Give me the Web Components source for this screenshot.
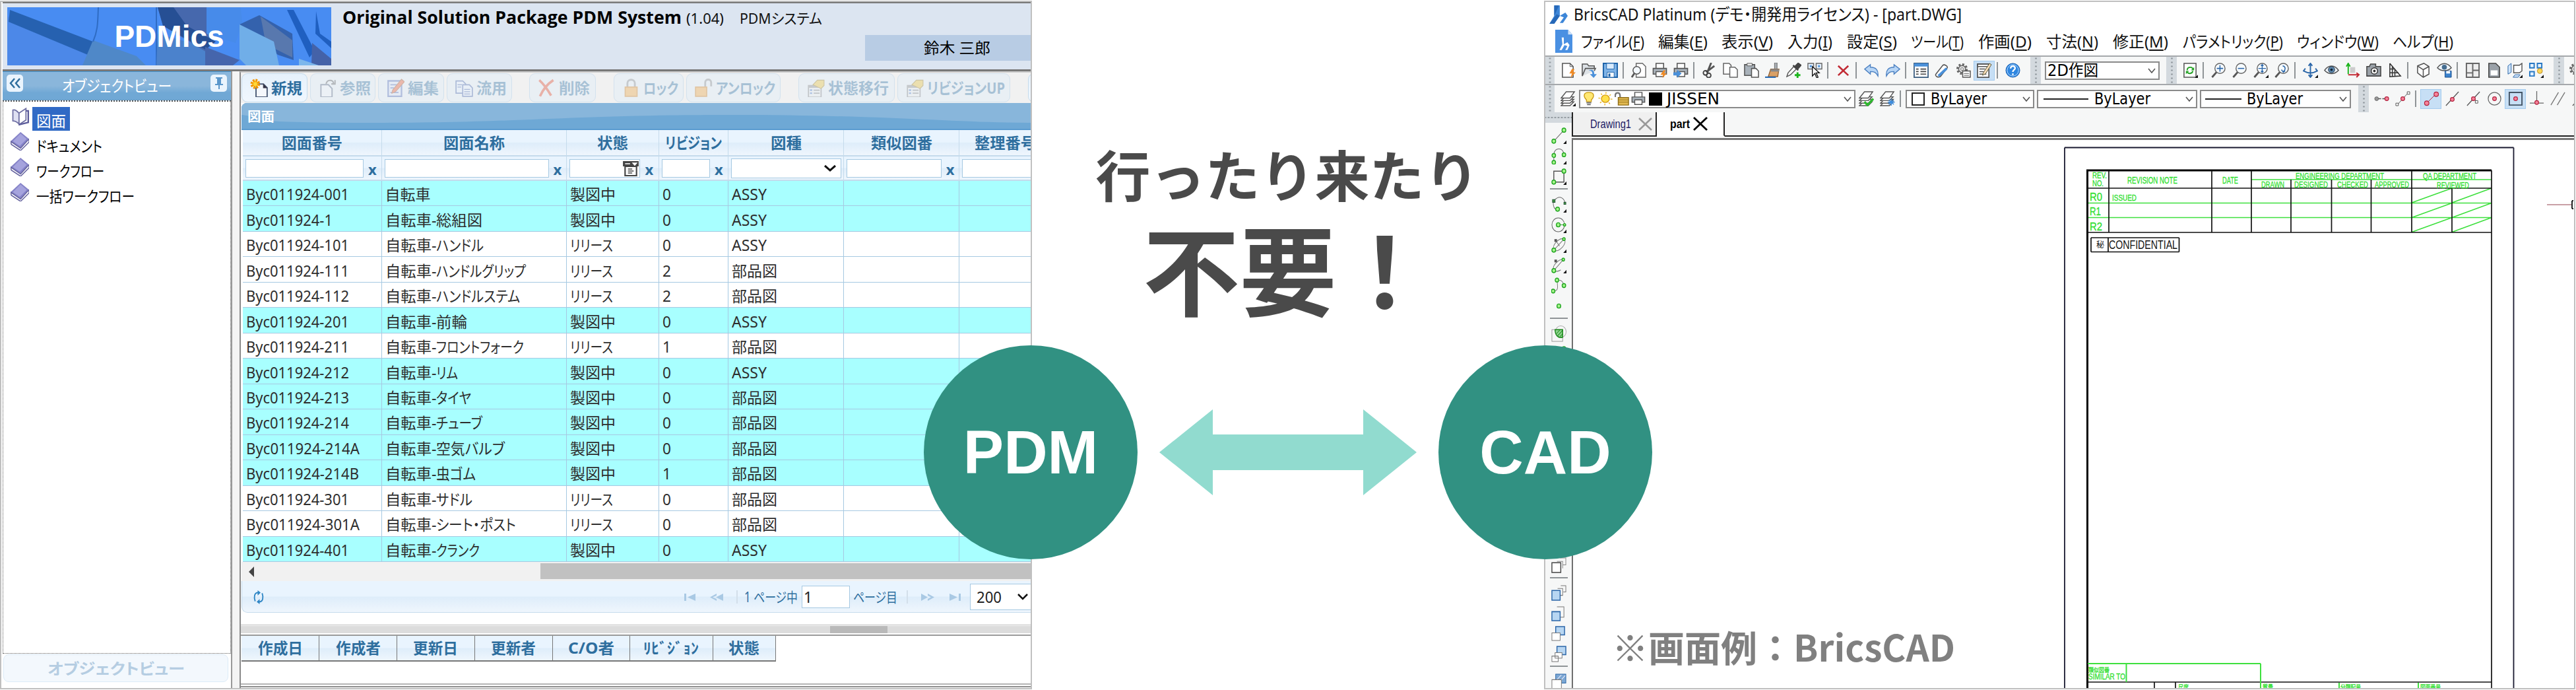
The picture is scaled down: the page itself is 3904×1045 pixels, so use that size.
<!DOCTYPE html>
<html lang="ja">
<head>
<meta charset="utf-8">
<title>PDMics / CAD</title>
<style>
    body{
        margin: 0;
        width: 3904px;
        height: 1045px;
        overflow: hidden;
        background-color: rgb(255, 255, 255);
        font-family: "Noto Sans", "Noto Sans CJK JP", sans-serif;
        line-height: 1;
    }
</style>
</head>
<body>
<link-banner></link-banner>
<script>

// every element clones its own template into an open shadow root
class BaseElement extends HTMLElement {
    constructor(){
        super();
        this.attachShadow({mode:'open'});
        const template = document.createElement('template');
        template.innerHTML = this.render();
        this.shadowRoot.appendChild(template.content.cloneNode(true));
    }
    render(){
        return '<slot></slot>';
    }
}

// one line of text squeezed or stretched to the width in its "w" attribute
class FitText extends BaseElement {
    render(){
        return `
        <style>
            :host{ display: inline-block; white-space: nowrap; text-align: left; font-feature-settings: "palt"; flex: none; }
            span{ display: inline-block; transform-origin: 0 50%; }
        </style>
        <span><slot></slot></span>`;
    }
    connectedCallback(){
        const span = this.shadowRoot.querySelector('span');
        const w = parseFloat(this.getAttribute('w'));
        const real = span.getBoundingClientRect().width;
        if(real > 0){
            span.style.transform = 'scaleX('+(w / real)+')';
        }
        this.style.width = w+'px';
    }
}
const fit = (w, text) => `<fit-text w="${w}">${text}</fit-text>`;

/* ---------- icons ---------- */
const G = 'fill="#a6f58c" stroke="#1fa51f" stroke-width="1.4"';
const R = 'fill="#f5849b" stroke="#b3203c" stroke-width="1.2"';
const corner = '<path d="M24 19v5h-5z" fill="#111"/>';
const printer = '<path d="M6 9V1h12v8" fill="#fff" stroke="#555" stroke-width="1.600"/><path d="M1.500 9h21v9h-21z" fill="#a9b2ba" stroke="#555" stroke-width="1.600"/><path d="M6 14h12v8H6z" fill="#fff" stroke="#555" stroke-width="1.500"/>';
const layers = '<g fill="#fff" stroke="#555" stroke-width="1.500"><path d="M1 23 7 17h14l-6 6z"/><path d="M1 19 7 13h14l-6 6z"/><path d="M1 15 7 9h14l-6 6z"/><path d="M1 11 9 1h13l-7 10z"/></g>';
const lens = '<path d="m8.500 15-7 8" stroke="#555" stroke-width="3"/><circle cx="14" cy="9" r="8" fill="#f6fbff" stroke="#666" stroke-width="1.500"/>';
const gear = '<circle cx="10" cy="10" r="7" fill="none" stroke="#666" stroke-width="4" stroke-dasharray="3 2.500"/><circle cx="10" cy="10" r="5.500" fill="#ddd" stroke="#666" stroke-width="1.500"/><circle cx="10" cy="10" r="2" fill="#fff" stroke="#666"/>';
const prop = '<path d="M2 9h17v15H2z" fill="#eee" stroke="#777" stroke-width="1.500"/><path d="M2 9h17v3H2z" fill="#888"/><path d="M4 15h3M4 19h3" stroke="#4472c4" stroke-width="2"/><path d="M9 15h8M9 19h8" stroke="#777" stroke-width="1.500"/><path d="m8 8 6-6h9v7l-4 4z" fill="#f1c232" stroke="#9c7a12"/>';

const icons = {
    // pdm toolbar
    newDoc: '<path d="M8 7h10l5 5v12H8z" fill="#f4f7fc" stroke="#4c5b77" stroke-width="1.700"/><path d="M18 7v5h5" fill="#334" stroke="#334"/><circle cx="7" cy="7" r="4.500" fill="#ffd83a" stroke="#f29400" stroke-width="4" stroke-dasharray="2.200 1.300"/>',
    openDoc: '<path d="M3 8h10l5 5v11H3z" fill="#f4f7fc" stroke="#4c5b77" stroke-width="1.700"/><path d="M10 7c1-6 9-6 10-1M22 2v5h-5" fill="none" stroke="#555" stroke-width="1.800"/>',
    editDoc: '<path d="M2 3h18v20H2z" fill="#dfe6f8" stroke="#4b66b5" stroke-width="2"/><path d="M5 8h9M5 12h5M5 18h11" stroke="#4b66b5" stroke-width="1.500"/><path d="M8 15 20 1l4 3-12 13-5 2z" fill="#f0532a" stroke="#a34415"/>',
    copyDoc: '<g fill="#e7efff" stroke="#3c5ba5" stroke-width="1.500"><path d="M1 3h9l4 4v12H1z"/><path d="M10 8h9l4 4v11H10z"/></g><path d="M12 14h8M12 17h8M12 20h8M3 8h6M3 11h5" stroke="#3c5ba5"/>',
    del: '<path d="M2 2c6 5 11 12 16 20M21 2C13 7 7 14 3 23" fill="none" stroke="#e8401c" stroke-width="3.200"/>',
    lock: '<path d="M7 12V6c0-6 10-6 10 0v6" fill="none" stroke="#888" stroke-width="2.500"/><path d="M4 11h16v12H4z" fill="#f8a73a" stroke="#d17a12" stroke-width="1.500"/>',
    unlock: '<path d="M14 12V5c0-5 8-5 8 0v5" fill="none" stroke="#888" stroke-width="2.500"/><path d="M1 11h15v12H1z" fill="#f8a73a" stroke="#d17a12" stroke-width="1.500"/>',
    prop: prop,
    bookOpen: '<path d="M3 4c3-1 5 1 8 4v14c-3-3-5-4-8-4z" fill="#dfe0f2" stroke="#6e6ea2" stroke-width="1.500"/><path d="M11 8 20 2v15l-9 6z" fill="#fff" stroke="#6e6ea2" stroke-width="1.500"/><path d="M20 5h3v15l-12 3" fill="none" stroke="#5c5c9b" stroke-width="2"/>',
    book: '<path d="M0 12 13 0l11 9-11 12z" fill="#8583c8"/><path d="M3 12 13 2l8 7-9 9z" fill="#a5a3dd"/><path d="m0 12 1 4 12 8 11-11V9L13 21z" fill="#fff" stroke="#66649f" stroke-width="1.300"/>',
    refresh: '<path d="M11 4C3 4 2 12 5 19M13 20c8 0 9-8 6-15" fill="none" stroke="#2f86c5" stroke-width="2.500"/><path d="M10 0v9l6-5zM14 15v9l-6-4z" fill="#2f86c5"/>',
    filter: '<path d="M1 1h22v8H1z" fill="#444"/><path d="M4 5h7M15 4h5l-2.500 3z" stroke="#fff" stroke-width="1.500" fill="#fff"/><path d="M4 9h16v14H4z" fill="#fff" stroke="#444" stroke-width="2"/><path d="M8 13h6M8 16h8M8 19h6" stroke="#444" stroke-width="1.500"/>',
    // cad toolbar
    logo: '<path d="M7 1h7v13l7-4 3 4-6 9h-4l5-7-5-2-7 10H1l6-10z" fill="#3d86d8"/><path d="M7 1h6L7 14zM1 24l9-12 4 2-7 10z" fill="#2668b8"/>',
    doclogo: '<path d="M0 0h18l6 5v19H0z" fill="#4a90e2"/><path d="M18 0v5h6z" fill="#cfe2f8"/><path d="M9 8h3v7l5-2 3 3-3 5h-3l3-4-4-1-4 5H6l4-6z" fill="#fff"/>',
    cnew: '<path d="M3 1h12l5 5v17H3z" fill="#fff" stroke="#555" stroke-width="1.600"/><path d="M15 1v5h5" fill="none" stroke="#555"/><path d="m18 10-4 7h4l-2 7 8-9h-4l2-5z" fill="#f08a24"/>',
    copen: '<path d="M1 21V2h8l2 3h9v4M1 21 6 9h16l-2 4" fill="#dde2e6" stroke="#555" stroke-width="1.600"/><path d="M11 12c5 0 6 3 6 6h-4l6 6 5-6h-4c0-6-3-8-9-6z" fill="#4a90d9"/>',
    csave: '<path d="M1 1h22v22H1z" fill="#7fb3e6" stroke="#1d62a8" stroke-width="2"/><path d="M6 1h12v9H6z" fill="#d9ebfd" stroke="#1d62a8"/><path d="M7 15h11v8H7z" fill="#fff" stroke="#1d62a8"/><path d="M9 17h3v5H9z" fill="#1d62a8"/>',
    preview: '<path d="M8 1h10l5 5v17H8z" fill="#fff" stroke="#666" stroke-width="1.500"/><circle cx="9" cy="12" r="6" fill="#f4f9ff" stroke="#555" stroke-width="1.600"/><path d="m5 17-4 6" stroke="#555" stroke-width="3"/>',
    print: printer + '<path d="m18 12-5 7h4l-1 5 7-7h-4l2-5z" fill="#f08a24"/>',
    publish: printer + '<path d="M0 15h6v-4l7 6-7 7v-4H0z" fill="#4a90d9"/>',
    cut: '<path d="M15 0 9 15M20 5 7 15" stroke="#555" stroke-width="3"/><circle cx="6" cy="16" r="3.500" fill="none" stroke="#444" stroke-width="2"/><circle cx="11" cy="20" r="3.500" fill="none" stroke="#444" stroke-width="2"/>',
    copy: '<g fill="#fff" stroke="#666" stroke-width="1.600"><path d="M1 1h9l3 3v14H1z"/><path d="M11 7h8l4 4v12H11z"/></g>',
    paste: '<path d="M1 3h16v17H1z" fill="#a9b2ba" stroke="#555" stroke-width="1.600"/><path d="M5 1h8v4H5z" fill="#eee" stroke="#555"/><path d="M12 9h7l4 4v10H12z" fill="#fff" stroke="#555" stroke-width="1.600"/>',
    brush: '<path d="M15 0h4v10h-4z" fill="#aab0b6" stroke="#666"/><path d="M9 10h13l-2 12H5z" fill="#d9a066" stroke="#8d5a2b" stroke-width="1.300"/><path d="M9 10h13v4H9z" fill="#888"/><path d="M0 23h17" stroke="#2b6cb3" stroke-width="2.500"/>',
    pick: '<path d="M1 22 3 16 12 6l4 4-9 9z" fill="#fff" stroke="#555" stroke-width="1.500"/><path d="m11 4 8 8M14 6l5-5 4 3-5 6z" stroke="#444" fill="#444" stroke-width="2.500"/><path d="M18 15v9M13.500 19.500h9" stroke="#1db51d" stroke-width="3"/>',
    select: '<g fill="#e8f2fc" stroke="#666" stroke-width="1.500"><path d="M1 1h9v9H1z"/><path d="M14 1h9v9h-9z"/></g><path d="M4 4h3v3H4zM17 4h3v3h-3z" fill="#4a90d9"/><path d="M8 6v15l4-4 3 7 2-1-3-7h5z" fill="#fff" stroke="#111" stroke-width="1.400"/>',
    cross: '<path d="m4 5 16 15M20 5 4 20" stroke="#c22b35" stroke-width="2.700"/>',
    undo: '<path d="M1 10 10 3v4c9 0 13 5 12 14-3-6-6-7-12-7v4z" fill="#b7d5f5" stroke="#4a7fc0" stroke-width="1.400"/>',
    redo: '<path d="m23 10-9-7v4C5 7 1 12 2 21c3-6 6-7 12-7v4z" fill="#b7d5f5" stroke="#4a7fc0" stroke-width="1.400"/>',
    propPanel: '<path d="M1 1h22v22H1z" fill="#fff" stroke="#36597d" stroke-width="1.800"/><path d="M1 1h22v5H1z" fill="#4a90d9"/><path d="M4 10h4M4 14h4M4 18h4M11 10h9M11 14h9M11 18h9" stroke="#444" stroke-width="1.800"/>',
    eraser: '<path d="M2 18 13 4c2-2 8 1 7 4L9 22c-4 2-9-1-7-4z" fill="#fff" stroke="#555" stroke-width="1.600"/><path d="M6 21 19 9" stroke="#4a90d9" stroke-width="4"/>',
    gear: gear + '<path d="M11 13h12v10H11z" fill="#fff" stroke="#555" stroke-width="1.500"/><path d="M13 17h8M13 20h8" stroke="#555"/>',
    note: '<path d="M1 2h18v21H1z" fill="#fff" stroke="#555" stroke-width="1.800"/><path d="M1 2h18v4H1zM4 10h9M4 14h7M4 18h11" stroke="#555" stroke-width="1.500"/><path d="M10 16 20 1l3 2-9 14-5 3z" fill="#f7dcb8" stroke="#553"/>',
    help: '<circle cx="12" cy="12" r="11" fill="#2e86e0" stroke="#1b5fae"/><circle cx="12" cy="12" r="9" fill="none" stroke="#bcdcff" stroke-width="1"/><path d="M8.500 9c0-5 7.500-4.500 7 0-.3 2.500-3.500 2.500-3.500 5.500M12 17v2.500" fill="none" stroke="#fff" stroke-width="2.400"/>',
    regen: '<path d="M2 1h19v22H2z" fill="#fff" stroke="#555" stroke-width="1.600"/><path d="M7 12c0-6 8-6 9-2M16 13c-1 5-8 5-9 1" fill="none" stroke="#28a428" stroke-width="2"/><path d="M18 7v5h-5zM5 18v-5h5z" fill="#28a428"/>' + corner,
    zoomIn: lens + '<path d="M14 4v10M9 9h10" stroke="#2b66a8" stroke-width="1.600"/>',
    zoomOut: lens + '<path d="M9 9h10" stroke="#2b66a8" stroke-width="1.600"/>',
    zoomAll: lens + '<path d="M14 3v12M8 9h12M12 5l2-2 2 2M12 13l2 2 2-2" stroke="#2b66a8" stroke-width="1.500" fill="none"/>' + corner,
    zoomPrev: lens + '<path d="M14 14c4-3 4-8-1-9M11 11l3 4 3-2" stroke="#2b66a8" stroke-width="1.500" fill="none"/>',
    pan: '<path d="M12 2v20M2 13c5 4 15 4 20 0M9 5l3-4 3 4M9 19l3 4 3-4M4 9l-3 4 5 2M20 9l3 4-5 2" fill="none" stroke="#2b66a8" stroke-width="2"/>' + corner,
    eye: '<path d="M1 12c6-9 16-9 22 0-6 7-16 7-22 0z" fill="#eef4fa" stroke="#555" stroke-width="1.500"/><circle cx="12" cy="11" r="5" fill="#5c87ad" stroke="#234"/><circle cx="12" cy="11" r="2" fill="#123"/>',
    ucs: '<path d="M8 7h8v9H8z" fill="#ccc"/><path d="M5 18V3M2 6l3-5 3 5" fill="none" stroke="#1db51d" stroke-width="2"/><path d="M5 19h16M18 16l4 3-4 4" fill="none" stroke="#c22b35" stroke-width="2"/>',
    camera: '<path d="M1 6h4l2-4h8v4h8v15H1z" fill="#9aa1a8" stroke="#444" stroke-width="1.600"/><circle cx="13" cy="13" r="5" fill="#fff" stroke="#333" stroke-width="1.500"/><circle cx="13" cy="13" r="2" fill="#333"/>',
    ramp: '<path d="M4 1v21l17-1L4 1M4 16h14M8 5v17M12 10v11M4 10h7" fill="none" stroke="#333" stroke-width="1.600"/>',
    cube: '<path d="M3 5 13 1l8 5v12l-9 5-9-7zM3 5l9 6 9-5M12 11v12" fill="#fff" stroke="#555" stroke-width="1.600"/>',
    eyeSave: '<path d="M1 8c6-9 16-9 22 0-6 6-16 6-22 0z" fill="#eef4fa" stroke="#555" stroke-width="1.500"/><circle cx="12" cy="7" r="4" fill="#456d90"/><path d="M13 13h10v10H13z" fill="#3b82cc" stroke="#1d4f8b"/><path d="M15 13h6v4h-6z" fill="#fff"/>',
    grid: '<path d="M2 1h20v22H2zM12 1v22M12 12h10M2 16h10" fill="#eee" stroke="#666" stroke-width="2"/>',
    sheet: '<path d="M4 1h11l6 6v16H4z" fill="#9aa1a8" stroke="#444" stroke-width="1.600"/><path d="M7 12h11v8H7z" fill="#fff"/>',
    views: '<path d="M1 5l5-4v14l-5 3z" fill="#cfe4fa" stroke="#2b66a8"/><path d="M10 4h9l4-3v12l-4 3h-9z" fill="#fff" stroke="#555" stroke-width="1.500"/><path d="M9 23l3-4h8l-3 4z" fill="#cfe4fa" stroke="#2b66a8"/>' + corner,
    blocks: '<g fill="#e5f2ff" stroke="#2778c4" stroke-width="2"><path d="M2 1h7v7H2zM14 1h7v7h-7zM2 14h7v7H2z"/></g><circle cx="18" cy="13" r="4" fill="#ffd65a" stroke="#b38a1c"/>' + corner,
    layer: layers + corner,
    layerOk: layers + '<path d="m9 17 5 5 9-10" fill="none" stroke="#2fb92f" stroke-width="3.500"/>',
    layerStar: layers + '<path d="M18 12v11M12.500 17.500h11M14 14l8 7M22 14l-8 7" stroke="#3c8de0" stroke-width="1.500"/>',
    bulb: '<path d="M12 1c10 0 9 8 4 13v3H8v-3C3 9 2 1 12 1z" fill="#ffe873" stroke="#c99a13" stroke-width="1.500"/><path d="M8 19h8M9 22h6" stroke="#666" stroke-width="2"/>',
    sun: '<circle cx="12" cy="12" r="10" fill="none" stroke="#e8b419" stroke-width="3" stroke-dasharray="1.500 6.350"/><circle cx="12" cy="12" r="6.500" fill="#ffe14d" stroke="#d89c10" stroke-width="1.500"/>',
    padlock: '<path d="M9 10V7c0-7-8-7-8 0v2" fill="none" stroke="#777" stroke-width="2.500"/><path d="M6 10h17v13H6z" fill="#e2ba52" stroke="#8e6d18" stroke-width="1.500"/><path d="M6 14h17M6 18h17" stroke="#8e6d18"/>',
    printer: printer,
    // draw strip
    line: `<path d="M5 19 19 5" stroke="#666"/><circle cx="4" cy="20" r="3" ${G}/><circle cx="20" cy="4" r="3" ${G}/>` + corner,
    pline: `<path d="M4 20V9C6-1 18-1 20 9" fill="none" stroke="#666"/><circle cx="4" cy="21" r="2.800" ${G}/><circle cx="4" cy="11" r="2.800" ${G}/><circle cx="20" cy="10" r="2.800" ${G}/>` + corner,
    rect: `<path d="M4 4h16v16H4z" fill="none" stroke="#555" stroke-width="1.500"/><circle cx="4" cy="20" r="3" ${G}/><circle cx="20" cy="4" r="3" ${G}/>` + corner,
    arc: `<path d="M5 6c9-9 16-2 17 5M3 9c0 6 2 10 6 11" fill="none" stroke="#666"/><path d="M2 5h4v4H2zM20 9h3v3h-3z" fill="#494" stroke="#253"/><circle cx="10" cy="19" r="3" ${G}/>` + corner,
    circle: `<circle cx="11" cy="12" r="10" fill="none" stroke="#666"/><path d="M11 12h10" stroke="#494"/><circle cx="11" cy="12" r="3" ${G}/><circle cx="21" cy="12" r="1.800" ${G}/>` + corner,
    ellipse: `<path d="M4 20C0 14 12 1 20 4c7 5-8 21-16 16zM4 20 20 4M7 6l6 8" fill="none" stroke="#777"/><path d="M5 4h4v4H5z" fill="#555"/><circle cx="4" cy="20" r="3" ${G}/><circle cx="20" cy="4" r="2" ${G}/>` + corner,
    earc: `<path d="M4 20C0 13 12 3 19 4M4 20c3 2 8 1 11-1M4 20 19 4" fill="none" stroke="#777"/><path d="M5 4h4v4H5z" fill="#555"/><circle cx="4" cy="20" r="3" ${G}/><circle cx="19" cy="4" r="2" ${G}/>` + corner,
    spline: `<path d="M4 20c12 0 1-17 8-16 5 0 7 3 8 8" fill="none" stroke="#777"/><circle cx="3" cy="20" r="2.800" ${G}/><circle cx="9" cy="4" r="2.800" ${G}/><circle cx="20" cy="12" r="2.800" ${G}/>`,
    point: `<circle cx="12" cy="12" r="3" ${G}/>`,
    hatch: '<path d="M1 6h17v17H1z" fill="none" stroke="#999"/><circle cx="15" cy="9" r="8.500" fill="none" stroke="#aaa"/><path d="M6 6h12v11c-7 2-12-3-12-11z" fill="#8ed48e" stroke="#1c8a1c" stroke-width="1.500"/><path d="m8 12 6-6M10 15l8-8M14 16l4-4" stroke="#1c8a1c"/>',
    front0: '<path d="M14 1h9v10h-5M9 6h9v10" fill="none" stroke="#888"/><path d="M1 8h14v14H1z" fill="#fff" stroke="#444" stroke-width="1.500"/>',
    front: '<path d="M15 1h8v9h-4M10 5h8v10h-4" fill="none" stroke="#777"/><path d="M1 8h13v14H1z" fill="#b7d6f2" stroke="#2b66a8" stroke-width="1.500"/>',
    above: '<path d="M9 2h11v15h-6" fill="none" stroke="#777"/><path d="M1 9h13v13H1z" fill="#b7d6f2" stroke="#2b66a8" stroke-width="1.500"/>',
    under: '<path d="M7 2h14v12H7z" fill="#b7d6f2" stroke="#2b66a8" stroke-width="1.500"/><path d="M1 11h13v11H1z" fill="#fff" stroke="#777"/>',
    back: '<path d="M9 1h14v12H9z" fill="#b7d6f2" stroke="#2b66a8" stroke-width="1.500"/><path d="M6 10h11v8H6zM1 15h10v8H1z" fill="#fff" stroke="#777"/>',
    hback: '<path d="M7 1h16v13H7z" fill="#7ba7d3" stroke="#2b66a8"/><path d="m8 10 8-8M12 13 22 3" stroke="#eef"/><path d="M1 9h15v14H1z" fill="#fff" stroke="#777"/>',
    // snap strip
    trackPt: `<path d="M4 12h7M13 12h6" stroke="#555" stroke-width="1.500"/><circle cx="4" cy="12" r="3" fill="#999" stroke="#666"/><circle cx="20" cy="12" r="3" ${R}/>`,
    from: `<path d="M3 22 21 2" stroke="#555"/><path d="M1 19h4v4H1zM19 1h4v4h-4z" fill="#fff" stroke="#555"/><circle cx="12" cy="12" r="3" ${R}/>`,
    endpt: `<path d="M5 19 19 5" stroke="#b3203c"/><circle cx="5" cy="19" r="3.500" ${R}/><circle cx="20" cy="5" r="3.500" ${R}/>`,
    midpt: `<path d="M2 23 22 1" stroke="#555" stroke-width="1.300"/><circle cx="12" cy="13" r="3" ${R}/>`,
    nearpt: `<path d="M2 23 22 1M12 12l6 5" stroke="#555" stroke-width="1.300"/><circle cx="12" cy="12" r="3" ${R}/><path d="M15 15h4v4h-4z" fill="#fff" stroke="#555"/>`,
    centpt: `<circle cx="12" cy="12" r="10" fill="none" stroke="#666" stroke-width="1.300"/><circle cx="12" cy="12" r="3" ${R}/>`,
    geopt: `<path d="M2 2h20v20H2z" fill="none" stroke="#456" stroke-width="2"/><circle cx="12" cy="12" r="3" ${R}/>`,
    perp: `<path d="M12 0v18M1 19h22" stroke="#666" stroke-width="1.300"/><circle cx="12" cy="18" r="3" ${R}/>`,
    para: '<path d="M1 22 13 2M11 22 23 2" stroke="#777" stroke-width="1.400"/>'
};

class UiIcon extends BaseElement {
    render(){
        return `
        <style>
            :host{ display: block; width: 24px; height: 24px; flex: none; }
            svg{ display: block; width: 100%; height: 100%; fill: none; }
        </style>
        <svg viewBox="0 0 24 24" preserveAspectRatio="none"></svg>`;
    }
    connectedCallback(){
        this.shadowRoot.querySelector('svg').innerHTML = icons[this.getAttribute('name')] || '';
    }
}

/* ---------- PDM side ---------- */
class PdmHeader extends BaseElement {
    render(){
        return `
        <style>
            :host{
                display: flex;
                box-sizing: border-box;
                height: 105px;
                padding: 6px 0 0 7px;
                background-color: rgb(220, 229, 241);
                border-top: 2px solid rgb(120, 120, 120);
                border-bottom: 3px solid rgb(120, 120, 120);
            }
            .banner{ display: grid; width: 491px; height: 88px; }
            .banner > *{ grid-area: 1 / 1; }
            .banner span{
                place-self: center;
                font: bold 46px/46px "Liberation Sans", sans-serif;
                color: rgb(255, 255, 255);
            }
            .info{ flex: 1; display: flex; flex-direction: column; padding-left: 17px; }
            .title{ display: flex; align-items: baseline; height: 42px; font-size: 22px; color: #111; }
            b{ font-size: 26px; line-height: 30px; font-family: "Open Sans", sans-serif; color: #000; }
            .user{
                align-self: flex-end;
                display: flex;
                align-items: center;
                width: 162px;
                height: 39px;
                padding-left: 89px;
                background-color: rgb(184, 204, 228);
                font-size: 23px;
            }
        </style>
        <div class="banner">
            <svg width="491" height="88" viewBox="0 0 491 88">
                <rect width="491" height="88" fill="#488cf2"/>
                <path d="M0 14 130 66 118 88H0z" fill="#4c88e8"/>
                <path d="m4 4 126 48-8 20L2 22z" fill="#2661b0"/>
                <path d="m130 50 66 24 14 14H114z" fill="#4f88c8"/>
                <path d="M138 0c-1 20 0 34-8 52M226 0v88" stroke="#2f6cc4" stroke-width="2" fill="none"/>
                <path d="M228 40 300 60v28h-74z" fill="#4b82cc"/>
                <path d="M228 0h74l14 34-14 34-66-40z" fill="#4668ad"/>
                <path d="m228 0 24 0 20 28 44 24-16 12-64-36z" fill="#264f94"/>
                <path d="M300 60 352 80l-10 8h-42z" fill="#4565ac"/>
                <path d="m302 0 52 0 2 24-10 30-44-14z" fill="#478bea"/>
                <path d="m352 26 30-14 50 28 2 40-24-8z" fill="#3462ad"/>
                <path d="m384 14 48 36v26l-40-20z" fill="#5878ae"/>
                <path d="m352 26 52 26 8 36h-50l-10-10z" fill="#70aee8"/>
                <path d="m424 4 10 0 32 62-8 10zM468 6l6 34 17 12v10l-24-22z" fill="#1f5fc0"/>
                <path d="m462 54 29 24v10h-30z" fill="#4462a8"/>
                <path d="m442 78 30 10h-30z" fill="#7db7ec"/>
            </svg>
            <span>PDMics</span>
        </div>
        <div class="info">
            <div class="title"><b>${fit(514, 'Original Solution Package PDM System')}</b><i style="width:7px"></i>${fit(57, '(1.04)')}<i style="width:24px"></i>${fit(125, 'PDMシステム')}</div>
            <div class="user">${fit(101, '鈴木 三郎')}</div>
        </div>`;
    }
}

class ObjectView extends BaseElement {
    render(){
        const item = (icon, w, text, on) => `<div class="item"><ui-icon name="${icon}"></ui-icon><span class="${on ? 'on' : ''}">${fit(w, text)}</span></div>`;
        return `
        <style>
            :host{
                display: flex;
                flex-direction: column;
                box-sizing: border-box;
                width: 348px;
                border-right: 2px solid #999;
                background: #fff;
            }
            header{
                display: flex;
                align-items: center;
                justify-content: space-between;
                height: 42px;
                padding: 0 6px;
                border-top: 1px solid #4297d7;
                border-bottom: 1px solid #6a9cc4;
                background: linear-gradient(#8ab6db 50%, #70a8d5 75%);
                color: #fff;
                font-size: 24px;
            }
            .box{
                display: grid;
                place-items: center;
                width: 25px;
                height: 26px;
                margin-bottom: 8px;
                border-radius: 5px;
                background: #eaf4fd;
            }
            .tree{
                flex: 1;
                padding: 8px 0 0 11px;
                border: 1px dotted #555;
                border-width: 2px 1px 1px 1px;
            }
            .item{ display: flex; height: 38.300px; font-size: 23px; }
            .item ui-icon{ width: 28px; height: 28px; }
            .item span{ display: flex; align-items: center; box-sizing: border-box; height: 36px; margin-left: 5px; padding: 6px 6px 0; }
            .item .on{ background: #316ac5; color: #fff; }
            footer{
                display: grid;
                place-items: center;
                width: 341px;
                height: 42px;
                margin: 1px 0 9px 1px;
                border: 1px solid #dcebf7;
                box-sizing: border-box;
                border-radius: 8px;
                background: #f3f8fd;
                color: #b5cde2;
                font-size: 23px;
                font-weight: bold;
            }
        </style>
        <header>
            <div class="box"><svg width="18" height="16"><path d="m8 1-6 7 6 7M16 1l-6 7 6 7" fill="none" stroke="#2e6e9e" stroke-width="2.500"/></svg></div>
            ${fit(166, 'オブジェクトビュー')}
            <div class="box"><svg width="14" height="18"><path d="M2 1h10M1 11h12M7 11v7" stroke="#5b97cb" stroke-width="2"/><path d="M4 1h6v10H4z" fill="#5b97cb"/></svg></div>
        </header>
        <div class="tree">
            ${item('bookOpen', 45, '図面', true)}
            ${item('book', 100, 'ドキュメント')}
            ${item('book', 103, 'ワークフロー')}
            ${item('book', 149, '一括ワークフロー')}
        </div>
        <footer>${fit(208, 'オブジェクトビュー')}</footer>`;
    }
}

class PdmToolbar extends BaseElement {
    render(){
        // [icon, button width, text width, label, gap after]
        const buttons = [
            ['newDoc', 100, 47, '新規', 4], ['openDoc', 99, 47, '参照', 4], ['editDoc', 100, 47, '編集', 4], ['copyDoc', 99, 46, '流用', 26],
            ['del', 101, 47, '削除', 27], ['lock', 106, 53, 'ロック', 4], ['unlock', 143, 90, 'アンロック', 27],
            ['prop', 146, 92, '状態移行', 4], ['prop', 171, 118, 'リビジョンUP', 27]
        ];
        return `
        <style>
            :host{ display: flex; height: 46px; padding: 1px 0 0 1px; box-sizing: border-box; background: #f1f1f1; overflow: hidden; }
            div{
                display: flex;
                align-items: center;
                flex: none;
                box-sizing: border-box;
                height: 44px;
                padding-left: 12px;
                border: 1px solid #d3e2ee;
                border-radius: 9px;
                background: #e9eff4;
                color: #2e6e9e;
                font-size: 23px;
                font-weight: bold;
            }
            div > *{ opacity: .35; }
            .on{ background: linear-gradient(#e6f1fb, #f0f7fe); border-color: #c5dbec; }
            .on > *{ opacity: 1; }
            ui-icon{ width: 27px; height: 28px; margin-right: 5px; }
        </style>
        ${buttons.map((b, i) => `<div class="${i ? '' : 'on'}" style="width:${b[1]}px;margin-right:${b[4]}px"><ui-icon name="${b[0]}"></ui-icon>${fit(b[2], b[3])}</div>`).join('')}
        <div class="on" style="width:60px"></div>`;
    }
}

class DrawingGrid extends BaseElement {
    render(){
        // [number, number width, name, name width, released, revision]
        const rows = [
            ['001', 156, '', 0, 0, 0], ['1', 131, '総組図', 70, 0, 0], ['101', 156, 'ハンドル', 72, 1, 0], ['111', 156, 'ハンドルグリップ', 136, 1, 2],
            ['112', 156, 'ハンドルステム', 127, 1, 2], ['201', 156, '前輪', 47, 0, 0], ['211', 156, 'フロントフォーク', 133, 1, 1], ['212', 156, 'リム', 33, 0, 0],
            ['213', 156, 'タイヤ', 53, 0, 0], ['214', 156, 'チューブ', 70, 0, 0], ['214A', 172, '空気バルブ', 104, 0, 0], ['214B', 171, '虫ゴム', 60, 0, 1],
            ['301', 156, 'サドル', 55, 1, 0], ['301A', 172, 'シート・ポスト', 121, 1, 0], ['401', 156, 'クランク', 66, 0, 0]
        ];
        const assy = ['001', '1', '101', '201', '212', '401'];
        const heads = [[92, '図面番号'], [93, '図面名称'], [47, '状態'], [86, 'リビジョン'], [47, '図種'], [93, '類似図番'], [93, '整理番号']];
        const field = w => `<div class="f"><i style="width:${w}px"></i><b>x</b></div>`;
        return `
        <style>
            :host{ display: block; margin-left: 1px; font-size: 23px; color: #2e2e2e; }
            .caption{ display: grid; height: 41px; background: #6ea8d5; border-radius: 8px 0 0 0; overflow: hidden; box-sizing: border-box; border-bottom: 2px solid #5a9bd0; }
            .caption > *{ grid-area: 1 / 1; }
            .caption b{ align-self: center; padding: 0 0 0 9px; color: #fff; font-size: 20px; }
            .row{
                display: grid;
                grid-template-columns: 210.500px 280.500px 139.500px 105.500px 175px 175px 140px;
                width: 1226px;
                overflow: hidden;
                box-sizing: border-box;
                margin-left: 2px;
            }
            .row > div{ display: flex; align-items: center; border-right: 1px solid #a6c9e2; box-sizing: border-box; }
            .head{ height: 40px; background: linear-gradient(#e9f4fe 48%, #deedfa 52%, #eff6fd); color: #2e6e9e; font-weight: bold; border-bottom: 2px solid #c5dbec; }
            .head > div{ justify-content: center; border-color: #c5dbec; }
            .filter{ height: 37px; background: linear-gradient(#e9f4fe 48%, #deedfa 52%, #eff6fd); border-bottom: 2px solid #c5dbec; }
            .filter > div{ border-color: #c5dbec; padding-left: 4px; }
            .filter i{ display: flex; box-sizing: border-box; flex: none; height: 28px; border: 1px solid #a6c9e2; background: #fff; align-items: center; justify-content: flex-end; }
            .filter b{ flex: 1; text-align: center; color: #2e6e9e; font-size: 22px; line-height: 22px; padding-top: 3px; }
            .data{ height: 38.470px; border-bottom: 1px solid #a6c9e2; background: #fff; }
            .data > div{ padding: 4px 0 0 5px; }
            .wip{ background: #a8ffff; }
            .scroll{ display: flex; align-items: center; height: 29px; background: #f1f1f1; padding-left: 11px; justify-content: space-between; }
            .thumb{ width: 743px; height: 24px; background: #c1c1c1; margin-bottom: 2px; }
        </style>
        <div class="caption">
            <svg width="1197" height="41" preserveAspectRatio="none" viewBox="0 0 1197 41"><path d="M0 0h1197v30C1080 30 980 18 740 18S430 30 200 30 40 22 0 18z" fill="#88b6db"/></svg>
            <b>${fit(41, '図面')}</b>
        </div>
        <div class="row head">${heads.map(h => `<div>${fit(h[0], h[1])}</div>`).join('')}</div>
        <div class="row filter">
            ${field(179)}${field(249)}
            <div class="f"><i style="width:107px"><ui-icon name="filter" style="width:26px"></ui-icon></i><b>x</b></div>
            ${field(73)}
            <div><i style="width:167px;height:30px;padding-right:7px"><svg width="18" height="12"><path d="m1 2 8 7 8-7" fill="none" stroke="#111" stroke-width="3"/></svg></i></div>
            ${field(144)}<div><i style="width:112px"></i></div>
        </div>
        ${rows.map(r => `<div class="row data ${r[4] ? '' : 'wip'}">
            <div>${fit(r[1], 'Byc011924-' + r[0])}</div>
            <div>${r[2] ? fit(77.500, '自転車-') + fit(r[3], r[2]) : fit(69, '自転車')}</div>
            <div>${r[4] ? fit(65, 'リリース') : fit(69, '製図中')}</div>
            <div>${fit(13, r[5])}</div>
            <div>${assy.includes(r[0]) ? fit(53, 'ASSY') : fit(69, '部品図')}</div>
            <div></div><div></div>
        </div>`).join('')}
        <div class="scroll"><svg width="8" height="16"><path d="M8 0v16L0 8z" fill="#444"/></svg><div class="thumb"></div></div>`;
    }
}

class GridPager extends BaseElement {
    render(){
        return `
        <style>
            :host{
                display: flex;
                align-items: center;
                box-sizing: border-box;
                height: 48px;
                margin-left: 1px;
                padding: 1px 0 0 16px;
                border: 1px solid #c5dbec;
                border-right: 0;
                border-top: 0;
                border-radius: 0 0 0 9px;
                background: linear-gradient(#e9f4fe 48%, #deedfa 52%, #eff6fd);
                color: #2e6e9e;
                font-size: 21px;
                overflow: hidden;
            }
            ui-icon{ width: 18px; height: 21px; }
            svg{ flex: none; fill: #a9c9e4; }
            i{ width: 2px; height: 20px; background: #d3dfea; flex: none; }
            div{ box-sizing: border-box; flex: none; display: flex; align-items: center; background: #fff; border: 1px solid #a6c9e2; color: #222; font-size: 23px; }
        </style>
        <ui-icon name="refresh"></ui-icon>
        <svg style="margin-left:636px" width="18" height="11"><path d="M0 0h3v11H0zM17 0v11L5 5.500z"/></svg>
        <svg style="margin-left:21px" width="21" height="11"><path d="M10 0v3L4 5.500l6 2.500v3L0 5.500zM20 0v11L9 5.500z"/></svg>
        <i style="margin:0 10px 0 19px"></i>
        ${fit(81, '1 ページ中')}
        <div style="width:73px;height:34px;margin:0 5px 0 6px;padding-left:2px">1</div>
        ${fit(67, 'ページ目')}
        <i style="margin:0 20px 0 14px"></i>
        <svg width="20" height="11"><path d="M0 0l10 5.500L0 11zM10 0l10 5.500-10 5.500V8l5-2.500L10 3z"/></svg>
        <svg style="margin:0 14px 0 23px" width="17" height="11"><path d="M0 0l12 5.500L0 11zM14 0h3v11h-3z"/></svg>
        <div style="width:110px;height:40px;padding-left:9px">${fit(38, '200')}<svg style="margin-left:24px" width="16" height="10"><path d="m1 1 7 7 7-7" fill="none" stroke="#111" stroke-width="2.500"/></svg></div>`;
    }
}

class DetailTabs extends BaseElement {
    render(){
        const tabs = [[118, 68, '作成日'], [118, 68, '作成者'], [117.500, 68, '更新日'], [118, 68, '更新者'], [117, 70, 'C/O者'], [126, 84, 'ﾘﾋﾞｼﾞｮﾝ'], [95, 47, '状態']];
        return `
        <style>
            :host{ display: block; border-top: 1px solid #bbb; }
            .bar{ height: 11px; margin-top: 1px; background: #dcdcdc; padding-left: 893px; }
            .bar div{ width: 87px; height: 11px; background: #b9b9b9; }
            nav{ display: flex; margin: 2px 0 0; padding-left: 1px; border-top: 2px solid #999; }
            nav div{
                display: grid;
                place-items: center;
                box-sizing: border-box;
                height: 39px;
                border-right: 1px solid #777;
                border-bottom: 2px solid #777;
                background: linear-gradient(#e9f4fe 48%, #deedfa 52%, #eff6fd);
                color: #2e6e9e;
                font-size: 23px;
                font-weight: bold;
            }
        </style>
        <div class="bar"><div></div></div>
        <nav>${tabs.map(t => `<div style="width:${t[0]}px">${fit(t[1], t[2])}</div>`).join('')}</nav>`;
    }
}

class PdmWindow extends BaseElement {
    render(){
        return `
        <style>
            :host{
                display: flex;
                flex-direction: column;
                box-sizing: border-box;
                width: 1564px;
                height: 1043px;
                margin-top: 1px;
                border: 2px solid #c0c0c0;
                padding-left: 2px;
                background: #fff;
                overflow: hidden;
            }
            .body{ display: flex; flex: 1; min-height: 0; }
            .split{ background: #f4f4f4; display: flex; flex: 1; min-width: 0; }
            main{
                display: flex;
                flex-direction: column;
                flex: 1;
                min-width: 0;
                margin-left: 11px;
                border-left: 2px solid #8a8a8a;
                border-top: 2px solid #ccc;
                background: #fff;
                overflow: hidden;
            }
            detail-tabs{ margin-top: 18px; }
            .end{ margin-top: auto; margin-bottom: 1px; height: 2px; border-top: 2px solid #b5b5b5; border-bottom: 2px solid #909090; }
        </style>
        <pdm-header></pdm-header>
        <div class="body">
            <object-view></object-view>
            <div class="split"><main>
                <pdm-toolbar></pdm-toolbar>
                <drawing-grid></drawing-grid>
                <grid-pager></grid-pager>
                <detail-tabs></detail-tabs>
                <div class="end"></div>
            </main></div>
        </div>`;
    }
}

/* ---------- message between the windows ---------- */
class CenterMessage extends BaseElement {
    render(){
        return `
        <style>
            :host{
                display: flex;
                flex-direction: column;
                align-items: center;
                width: 776px;
                font-family: "Noto Sans CJK JP", sans-serif;
                font-weight: bold;
                color: #4a4a4a;
            }
            .small{ font-size: 83px; line-height: 100px; margin: 212px 0 0 -2px; white-space: nowrap; }
            .big{ font-size: 146.500px; line-height: 180px; margin-top: 1px; white-space: nowrap; }
            svg{ margin-top: 127px; }
        </style>
        <div class="small">行ったり来たり</div>
        <div class="big">不要！</div>
        <svg width="390" height="130"><path d="M0 65 81 0v38h228V0l81 65-81 65V92H81v38z" fill="#91dbcf"/></svg>`;
    }
}

class RoundBadge extends BaseElement {
    render(){
        return `
        <style>
            :host{
                display: grid;
                place-items: center;
                position: absolute;
                top: 523px;
                width: 324px;
                height: 324px;
                border-radius: 50%;
                background: #319182;
                color: #fff;
                font: bold 92px/92px "Liberation Sans", sans-serif;
            }
        </style>
        <slot></slot>`;
    }
}

/* ---------- CAD side ---------- */
class CadMenu extends BaseElement {
    render(){
        const items = [
            [96, 'ファイル', 'F', 21], [75, '編集', 'E', 21], [78, '表示', 'V', 22], [68, '入力', 'I', 22], [76, '設定', 'S', 21], [80, 'ツール', 'T', 22],
            [81, '作画', 'D', 22], [79, '寸法', 'N', 22], [84, '修正', 'M', 22], [152, 'パラメトリック', 'P', 21], [124, 'ウィンドウ', 'W', 21], [92, 'ヘルプ', 'H', 0]
        ];
        return `
        <style>
            :host{ display: block; height: 81px; background: #fff; font-size: 24px; color: #111; }
            .title{ display: flex; align-items: center; height: 36px; padding-left: 5px; gap: 9px; font-size: 25px; }
            nav{ display: flex; align-items: center; height: 41px; padding: 3px 0 0 15px; }
            u{ text-underline-offset: 3px; text-decoration-thickness: 2px; }
        </style>
        <div class="title"><ui-icon name="logo" style="width:29px;height:29px"></ui-icon>${fit(588, 'BricsCAD Platinum (デモ・開発用ライセンス) - [part.DWG]')}</div>
        <nav><ui-icon name="doclogo" style="width:26px;height:35px;margin-right:13px"></ui-icon>
        ${items.map(i => `<span style="display:flex;margin-right:${i[3]}px">${fit(i[0], `${i[1]}(<u>${i[2]}</u>)`)}</span>`).join('')}</nav>`;
    }
}

class CadCombo extends BaseElement {
    render(){
        return `
        <style>
            :host{
                display: flex;
                align-items: center;
                box-sizing: border-box;
                flex: none;
                height: 28px;
                padding: 0 4px 0 2px;
                border: 2px solid #8a8a8a;
                background: #fff;
                color: #000;
                font-family: "DejaVu Sans", "Noto Sans CJK JP", sans-serif;
                font-size: 24px;
            }
            svg{ margin-left: auto; flex: none; }
        </style>
        <slot></slot>
        <svg width="12" height="8"><path d="m1 1 5 6 5-6" fill="none" stroke="#555" stroke-width="1.600"/></svg>`;
    }
}

const tool = name => {
    if(name === '|') return '<hr>';
    const on = name[0] === '*';
    return `<span class="t ${on ? 'on' : ''}"><ui-icon name="${on ? name.slice(1) : name}"></ui-icon></span>`;
};
const tools = list => list.split(' ').map(tool).join('');

class CadToolbars extends BaseElement {
    render(){
        const grip = (w, m) => `<div class="grip" style="width:${w}px;margin:${m}"></div>`;
        return `
        <style>
            :host{ display: block; background: #f6f7f7; color: #000; }
            .bar{ display: flex; align-items: center; box-sizing: border-box; height: 43px; border-top: 2px solid #a5a8ab; overflow: hidden; }
            .t{ display: grid; place-items: center; width: 32px; height: 30px; flex: none; box-sizing: border-box; }
            .on{ background: #c7dff5; border: 1px solid #a3cbee; }
            .t ui-icon{ width: 23px; height: 23px; }
            hr{ width: 2px; height: 25px; border: 0; margin: 0 6px 0 3px; background: #8f9497; flex: none; }
            .grip{ flex: none; align-self: stretch; background: radial-gradient(circle, #8d949a 1px, transparent 1.500px) center / 15px 6px repeat-y #d3d9de; }
            cad-combo ui-icon{ width: 22px; height: 21px; margin-right: 3px; }
        </style>
        <div class="bar">${grip(14, '0 4px 0 0')}
            ${tools('cnew copen csave | preview print publish | cut copy paste brush pick select | cross | undo redo | propPanel eraser gear *note | help')}
            ${grip(16, '0 6px 0 11px')}
            <cad-combo style="width:174px">${fit(77, '2D作図')}</cad-combo>
            ${grip(16, '0 4px 0 10px')}
            ${tools('regen | zoomIn zoomOut zoomAll zoomPrev | pan eye ucs camera ramp | cube eyeSave | grid sheet views blocks')}
            ${grip(16, '0 2px 0 11px')}${tools('gear')}
        </div>
        <div class="bar">${grip(14, '0 4px 0 0')}
            ${tools('layer')}
            <cad-combo style="width:419px;margin-left:1px">
                <ui-icon name="bulb"></ui-icon><ui-icon name="sun"></ui-icon><ui-icon name="padlock"></ui-icon><ui-icon name="printer"></ui-icon>
                <i style="width:20px;height:20px;background:#000;margin:0 7px 0 2px"></i>${fit(80, 'JISSEN')}
            </cad-combo>
            ${tools('layerOk layerStar |')}
            <cad-combo style="width:195px;margin-left:1px"><i style="width:16px;height:16px;border:2px solid #222;margin:0 9px 0 5px"></i>${fit(85, 'ByLayer')}</cad-combo>
            <cad-combo style="width:243px;margin-left:4px"><i style="width:68px;height:2px;background:#222;margin:0 9px 0 6px"></i>${fit(85, 'ByLayer')}</cad-combo>
            <cad-combo style="width:229px;margin-left:4px"><i style="width:55px;height:2px;background:#222;margin:0 8px 0 4px"></i>${fit(85, 'ByLayer')}</cad-combo>
            ${grip(16, '0 3px 0 11px')}
            ${tools('trackPt from | *endpt midpt nearpt centpt *geopt perp para midpt')}
        </div>`;
    }
}

// drawing frame with the revision table; its own coordinates start at the top left of the canvas
class DrawingSheet extends BaseElement {
    render(){
        const txt = (x, y, w, size, s) => `<text x="${x - 2385}" y="${y - 212}" font-size="${size}" textLength="${w}" lengthAdjust="spacingAndGlyphs">${s}</text>`;
        const line = (x1, y1, x2, y2) => `M${x1 - 2385} ${y1 - 212}L${x2 - 2385} ${y2 - 212}`;
        const cells = [285, 307.5, 329.5].map(y => line(3656, y + 22, 3717, y) + line(3717, y + 22, 3777, y)).join('');
        return `
        <style>
            :host{ display: block; flex: 1; overflow: hidden; background: #fff; }
            svg{ display: block; font-family: "Liberation Sans", "Noto Sans CJK JP", sans-serif; fill: none; }
            text{ fill: #2fe02f; stroke: #2fe02f; stroke-width: .3px; }
            .k text{ fill: #111; stroke: none; }
        </style>
        <svg width="1516" height="830">
            <path stroke="#1a1a30" stroke-width="1.800" d="${line(3130, 223.5, 3130, 1045)}${line(3130, 223.5, 3810.5, 223.5)}${line(3810.5, 223.5, 3810.5, 1045)}"/>
            <path stroke="#3ee03e" stroke-width="1.700" d="${line(3413, 272, 3777, 272)}${line(3165, 307.5, 3777, 307.5)}${line(3165, 329.5, 3777, 329.5)}${cells}"/>
            <path stroke="#000" stroke-width="3" d="${line(3164.5, 258, 3164.5, 1045)}${line(3163, 258, 3777, 258)}"/>
            <path stroke="#111" stroke-width="1.700" d="${line(3777, 258, 3777, 1045)}${line(3165, 285, 3777, 285)}${line(3165, 352, 3777, 352)}${line(3165, 1033, 3777, 1033)}
                ${[3197, 3353, 3413, 3656].map(x => line(x, 258, x, 352)).join('')}${[3473, 3534.5, 3594.5].map(x => line(x, 272, x, 352)).join('')}${line(3717, 285, 3717, 352)}${line(3298, 1033, 3298, 1045)}${line(3266, 1033, 3266, 1045)}"/>
            <path stroke="#3ee03e" stroke-width="2" d="${line(3165, 1005, 3427, 1005)}${line(3427, 1005, 3427, 1045)}${line(3223.5, 1005, 3223.5, 1033)}${line(3546, 1034, 3546, 1045)}${line(3666, 1034, 3666, 1045)}"/>
            ${txt(3172, 269.5, 22, 12, 'REV.')}${txt(3172, 281.5, 17, 12, 'NO.')}
            ${txt(3225, 278, 76, 14, 'REVISION NOTE')}${txt(3369, 278, 24, 14, 'DATE')}
            ${txt(3480, 270.5, 134, 12.5, 'ENGINEERING DEPARTMENT')}${txt(3673, 270.5, 81, 12.5, 'QA DEPARTMENT')}
            ${txt(3428, 284, 35, 12.5, 'DRAWN')}${txt(3478, 284, 51, 12.5, 'DESIGNED')}${txt(3543, 284, 47, 12.5, 'CHECKED')}${txt(3600, 284, 52, 12.5, 'APPROVED')}${txt(3694, 284.5, 49, 12, 'REVIEWED')}
            ${txt(3168, 304, 19, 17, 'R0')}${txt(3168, 326, 17, 17, 'R1')}${txt(3168, 349, 19, 17, 'R2')}${txt(3202, 304, 37, 12.5, 'ISSUED')}
            ${txt(3166, 1017.5, 32, 9, '類似図番')}${txt(3166, 1029, 56, 12, 'SIMILAR TO')}
            ${txt(3302, 1044, 16, 9, '尺度')}${txt(3430, 1044, 16, 9, '質量')}${txt(3548, 1044, 31, 9, '分類記号')}${txt(3669, 1044, 31, 9, '図面番号')}
            <g class="k">
                <path stroke="#111" stroke-width="1.700" d="${line(3170, 360, 3303.5, 360)}${line(3303.5, 360, 3303.5, 381.5)}${line(3303.5, 381.5, 3170, 381.5)}${line(3170, 381.5, 3170, 360)}${line(3196, 360, 3196, 381.5)}"/>
                ${txt(3178, 375, 12, 12, '秘')}${txt(3197, 376.500, 104, 18, 'CONFIDENTIAL')}
            </g>
            <path stroke="#c9a0a6" stroke-width="2" d="${line(3861, 310, 3899, 310)}"/>
            <path stroke="#222" stroke-width="2" d="${line(3902, 304, 3899, 304)}${line(3899, 304, 3899, 316)}${line(3899, 316, 3902, 316)}"/>
        </svg>`;
    }
}

class CadWindow extends BaseElement {
    render(){
        return `
        <style>
            :host{ display: flex; flex-direction: column; box-sizing: border-box; width: 1563px; height: 1043px; margin-top: 1px; border: 2px solid #c0c0c0; background: #f6f7f7; overflow: hidden; }
            .work{ display: flex; flex: 1; min-height: 0; }
            aside{ width: 40px; flex: none; background: #f6f7f7; }
            .grip{ height: 16px; margin-bottom: 4px; background: radial-gradient(circle, #8d949a 1px, transparent 1.500px) center / 5px 16px repeat-x #d3d9de; }
            .t{ display: grid; place-items: center; height: 30.900px; }
            .t ui-icon{ width: 23px; height: 25px; }
            hr{ width: 27px; height: 2px; border: 0; margin: 2px auto 7px; background: #8f9497; }
            .right{ flex: 1; min-width: 0; display: flex; flex-direction: column; }
            .tabs{ display: flex; height: 37px; font: 18px/18px "Liberation Sans", sans-serif; border-left: 2px solid #222; }
            .tabs div{ display: flex; align-items: center; box-sizing: border-box; border-bottom: 2px solid #222; border-right: 2px solid #222; }
            .one{ width: 127px; padding-left: 26px; gap: 11px; background: #f0f0f0; color: #226; }
            .two{ width: 103px; padding-left: 20px; gap: 5px; background: #fff; font-weight: bold; border-bottom-color: #fff !important; }
            .tabs .rest{ flex: 1; border-right: 0; }
            .canvas{ flex: 1; min-height: 0; display: flex; margin-top: 2px; border-left: 2px solid #6f6f6f; border-top: 3px solid #777; }
        </style>
        <cad-menu></cad-menu>
        <cad-toolbars></cad-toolbars>
        <div class="work">
            <aside><div class="grip"></div>${tools('line pline rect | arc circle ellipse earc spline point | hatch line line line line line | line line line line line front0 | front above under back | hback')}</aside>
            <div class="right">
                <div class="tabs">
                    <div class="one">${fit(62, 'Drawing1')}<svg width="21" height="20"><path d="m1 1 19 18M20 1 1 19" stroke="#999" stroke-width="2.500"/></svg></div>
                    <div class="two">${fit(30, 'part')}<svg width="22" height="21"><path d="m1 1 20 19M21 1 1 20" stroke="#000" stroke-width="2.800"/></svg></div>
                    <div class="rest"></div>
                </div>
                <div class="canvas"><drawing-sheet></drawing-sheet></div>
            </div>
        </div>`;
    }
}

class LinkBanner extends BaseElement {
    render(){
        return `
        <style>
            :host{ display: flex; position: relative; width: 3904px; height: 1045px; overflow: hidden; }
            .note{ position: absolute; left: 2443px; top: 948px; font: bold 55px/60px "Noto Sans CJK JP", sans-serif; color: #808080; white-space: nowrap; }
        </style>
        <pdm-window></pdm-window>
        <center-message></center-message>
        <cad-window></cad-window>
        <round-badge style="left:1400px">PDM</round-badge>
        <round-badge style="left:2180px">CAD</round-badge>
        <div class="note">※画面例：BricsCAD</div>`;
    }
}

window.customElements.define('fit-text',FitText);
window.customElements.define('ui-icon',UiIcon);
window.customElements.define('pdm-header',PdmHeader);
window.customElements.define('object-view',ObjectView);
window.customElements.define('pdm-toolbar',PdmToolbar);
window.customElements.define('drawing-grid',DrawingGrid);
window.customElements.define('grid-pager',GridPager);
window.customElements.define('detail-tabs',DetailTabs);
window.customElements.define('pdm-window',PdmWindow);
window.customElements.define('center-message',CenterMessage);
window.customElements.define('round-badge',RoundBadge);
window.customElements.define('cad-menu',CadMenu);
window.customElements.define('cad-combo',CadCombo);
window.customElements.define('cad-toolbars',CadToolbars);
window.customElements.define('drawing-sheet',DrawingSheet);
window.customElements.define('cad-window',CadWindow);
window.customElements.define('link-banner',LinkBanner);
</script>
</body>
</html>
